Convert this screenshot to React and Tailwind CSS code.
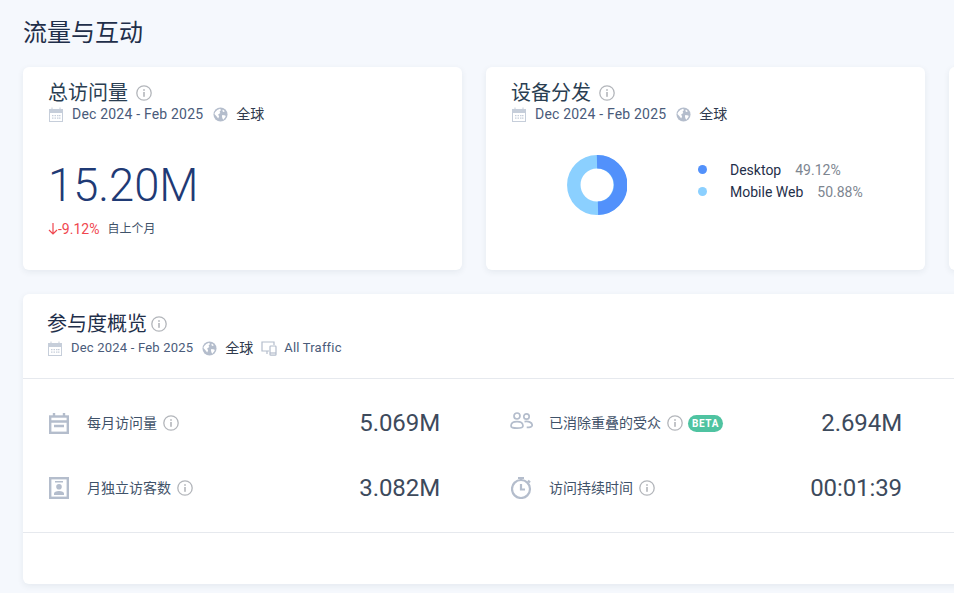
function Info({ className = '' }) {
  return (
    <svg viewBox="0 0 16 16" className={`w-4 h-4 shrink-0 ${className}`} fill="none">
      <circle cx="8" cy="8" r="7.200" stroke="#b3b6bb" strokeWidth="1.300" />
      <rect x="7.200" y="7" width="1.600" height="4.800" fill="#b3b6bb" />
      <rect x="7.200" y="4.200" width="1.600" height="1.600" fill="#b3b6bb" />
    </svg>
  );
}
function Cal({ className = '' }) {
  return (
    <svg viewBox="0 0 14 15" className={`w-[14px] h-[15px] shrink-0 ${className}`}>
      <path fillRule="evenodd" fill="#c6ceda" d="M0 2h2.500V.5h1V2h7V.5h1V2H14v13H0V2zm1 4v8h12V6H1z" />
      <path fill="#c6ceda" d="M3 8h1.500v1.200H3zM5.500 8H7v1.200H5.500zM8 8h1.500v1.200H8zM10 8h1.500v1.200H10zM3 10.500h1.500v1.200H3zM5.500 10.500H7v1.200H5.500zM8 10.500h1.500v1.200H8zM10 10.500h1.500v1.200H10z" />
    </svg>
  );
}
function Globe({ className = '' }) {
  return (
    <svg viewBox="0 0 16 16" className={`w-[15px] h-[15px] shrink-0 ${className}`}>
      <circle cx="8" cy="8" r="7.500" fill="#b4bdcc" />
      <path fill="#fff" d="M2.200 5.500 4.500 3.200 7.500 1.800l1 1.500L7 5l.8 1.500L5.500 8l1 2-1 2.200-2-2.700L1.500 7.500zM10 8.500l3.200.5.300 1.500-2.500 3-1-1.500-.5-2.500zM10.500 2.600l2.200 1.900-1.700.8-1-1z" />
    </svg>
  );
}
function Devices({ className = '' }) {
  return (
    <svg viewBox="0 0 16 16" className={`w-[16px] h-[16px] shrink-0 ${className}`} fill="none" stroke="#b4bdcc" strokeWidth="1.200">
      <path d="M8 11H1V2h12v3" />
      <path d="M6 11v3" />
      <rect x="9" y="6" width="6" height="9.200" rx=".8" />
      <path d="M9 13h6" />
    </svg>
  );
}
function Period() {
  return (
    <div className="flex items-center text-[14px] leading-[20px] text-[#4a5b7a] -mt-[2px]">
      <Cal className="ml-[1px]" />
      <span className="ml-[9px] tracking-[0.2px] whitespace-nowrap">Dec 2024 - Feb 2025</span>
      <Globe className="ml-[10px]" />
      <span className="ml-[8px] text-[#2f3a4d]">全球</span>
    </div>
  );
}
function Card({ children, className = '' }) {
  return (
    <section className={`bg-white rounded-md shadow-[0_2px_6px_rgba(42,62,82,0.08)] ${className}`}>
      {children}
    </section>
  );
}
function CardHead({ title }) {
  return (
    <div className="flex items-center gap-[8px] text-[20px] leading-[26px] text-[#2a3e52]">
      <span>{title}</span>
      <Info />
    </div>
  );
}
function MonthIcon() {
  return (
    <svg viewBox="0 0 20 21" className="w-[20px] h-[21px]" fill="none" stroke="#b4bdcc" strokeWidth="2.400">
      <rect x="1.200" y="3.500" width="17.600" height="16.300" />
      <path d="M1 8.500h18M5 0v4M15 0v4M5 13h10" />
    </svg>
  );
}
function PersonIcon() {
  return (
    <svg viewBox="0 0 20 22" className="w-[20px] h-[22px]">
      <rect x="1.200" y="1.200" width="17.600" height="19.600" fill="none" stroke="#b4bdcc" strokeWidth="2.400" />
      <path fill="#b4bdcc" d="M6 4h8v1.500H6zM10 7a2.800 2.800 0 1 1 0 5.600A2.800 2.800 0 0 1 10 7zM5 18v-1.500c0-1.600 2-2.500 5-2.500s5 .9 5 2.500V18z" />
    </svg>
  );
}
function PeopleIcon() {
  return (
    <svg viewBox="0 0 23 18" className="w-[23px] h-[18px] -mt-[5px]" fill="none" stroke="#b4bdcc" strokeWidth="1.700">
      <circle cx="7" cy="4" r="3" />
      <circle cx="16.500" cy="4.500" r="2.700" />
      <path d="M1 14c0-2.700 2.500-4.300 6-4.300s6 1.600 6 4.300c0 1.500-2 2.200-6 2.200s-6-.7-6-2.200z" />
      <path d="M14.500 9.600c4-.6 7.700.8 7.700 3.600 0 1.500-1.700 2.200-5.500 2.200" />
    </svg>
  );
}
function TimerIcon() {
  return (
    <svg viewBox="0 0 21 22" className="w-[21px] h-[22px] ml-[1px]" fill="none" stroke="#b4bdcc" strokeWidth="2.200">
      <circle cx="10" cy="12" r="9" />
      <path d="M7 1h6M10 1v2M17 3.500l2 2" />
      <path d="M10 7v5.500h4" />
    </svg>
  );
}
function Metric({ icon, label, value, beta, iconClass = '' }) {
  return (
    <div className="flex items-center h-[24px]">
      <div className={`w-[39px] shrink-0 flex ${iconClass}`}>{icon}</div>
      <span className="text-[14px] text-[#3f5269] whitespace-nowrap">{label}</span>
      <Info className="ml-[6px]" />
      {beta && (
        <span className="ml-[5px] h-[17px] w-[35px] flex items-center justify-center rounded-full bg-[#4fc3a1] text-white text-[10px] font-bold tracking-[0.6px]">
          BETA
        </span>
      )}
      <span className="ml-auto text-[24px] text-[#3d4a5c] whitespace-nowrap tracking-[-0.1px]">{value}</span>
    </div>
  );
}
export default function App() {
  return (
    <div
      className="w-[954px] h-[593px] overflow-hidden bg-[#f5f8fd] pl-[23px] pt-[16px]"
      style={{ fontFamily: 'Roboto, "Noto Sans CJK SC", sans-serif' }}
    >
      <h1 className="text-[24px] leading-[34px] text-[#1f2f4a] font-normal">流量与互动</h1>
      <div className="flex gap-[24px] mt-[17px] w-[1400px]">
        <Card className="w-[439px] h-[203px] px-[25px] pt-[13px]">
          <CardHead title="总访问量" />
          <Period />
          <div className="mt-[34px] text-[45.3px] leading-[56px] font-light text-[#1f3a75]">15.20M</div>
          <div className="flex items-center mt-[6px] text-[14px] leading-[18px]">
            <svg viewBox="0 0 10 12" className="w-[10px] h-[12px]" fill="none" stroke="#f0474f" strokeWidth="1.200">
              <path d="M5 0v11M1 7l4 4 4-4" />
            </svg>
            <span className="text-[#f0474f]">-9.12%</span>
            <span className="ml-[8px] text-[12px] text-[#3f5269]">自上个月</span>
          </div>
        </Card>
        <Card className="w-[439px] h-[203px] px-[25px] pt-[13px]">
          <CardHead title="设备分发" />
          <Period />
          <div className="flex mt-[31px]">
            <svg viewBox="0 0 60 60" className="w-[60px] h-[60px] ml-[56px] shrink-0">
              <circle cx="30" cy="30" r="23.200" fill="none" stroke="#8bd0ff" strokeWidth="13.500" />
              <path d="M30 6.800A23.200 23.200 0 0 1 31 53.200" fill="none" stroke="#5291fb" strokeWidth="13.500" />
            </svg>
            <div className="ml-[71px] mt-[4px] text-[14px] leading-[22px]">
              <div className="flex items-center">
                <span className="w-[9px] h-[9px] rounded-full bg-[#5291fb] -mt-[2px]" />
                <span className="ml-[23px] text-[#1f2f4a]">Desktop</span>
                <span className="ml-[14px] text-[#7d8590]">49.12%</span>
              </div>
              <div className="flex items-center">
                <span className="w-[9px] h-[9px] rounded-full bg-[#8bd0ff] -mt-[2px]" />
                <span className="ml-[23px] text-[#1f2f4a]">Mobile Web</span>
                <span className="ml-[14px] text-[#7d8590]">50.88%</span>
              </div>
            </div>
          </div>
        </Card>
        <Card className="w-[439px] h-[203px]" />
      </div>
      <Card className="w-[1400px] h-[290px] mt-[24px]">
        <div className="h-[85px] pl-[24px] pt-[17px] border-b border-[#e6e9ee]">
          <div className="flex items-center gap-[4px] text-[20px] leading-[26px] text-[#1f2f4a]">
            <span>参与度概览</span>
            <Info />
          </div>
          <div className="flex items-center text-[13px] leading-[20px] text-[#4a5b7a] mt-[1px]">
            <Cal className="ml-[1px]" />
            <span className="ml-[9px] tracking-[0.2px] whitespace-nowrap">Dec 2024 - Feb 2025</span>
            <Globe className="ml-[9px]" />
            <span className="ml-[8px] text-[14px] text-[#2f3a4d]">全球</span>
            <Devices className="ml-[8px]" />
            <span className="ml-[7px] tracking-[0.2px]">All Traffic</span>
          </div>
        </div>
        <div className="h-[154px] border-b border-[#e6e9ee] pl-[25px] pt-[32px] grid grid-cols-[392px_392px] gap-x-[70px] gap-y-[41px] content-start">
          <Metric icon={<MonthIcon />} iconClass="pl-[1px]" label="每月访问量" value="5.069M" />
          <Metric icon={<PeopleIcon />} label="已消除重叠的受众" value="2.694M" beta />
          <Metric icon={<PersonIcon />} iconClass="pl-[1px]" label="月独立访客数" value="3.082M" />
          <Metric icon={<TimerIcon />} label="访问持续时间" value="00:01:39" />
        </div>
      </Card>
    </div>
  );
}
